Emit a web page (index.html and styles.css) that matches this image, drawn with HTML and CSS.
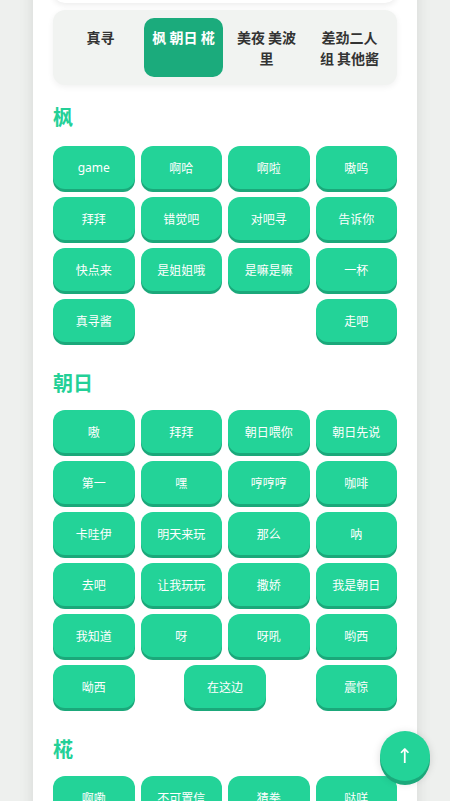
FILE: index.html
```html
<!DOCTYPE html>
<html lang="zh">
<head>
<meta charset="utf-8">
<title>Sounds</title>
<link rel="stylesheet" href="styles.css">
</head>
<body>
<div class="page">
  <div class="prev-card"></div>
  <nav class="tabs">
    <div class="tab">真寻</div>
    <div class="tab active">枫 朝日 椛</div>
    <div class="tab">美夜 美波里</div>
    <div class="tab">差劲二人组 其他酱</div>
  </nav>

  <section class="section">
    <h2 class="title">枫</h2>
    <div class="grid">
      <button class="btn">game</button>
      <button class="btn">啊哈</button>
      <button class="btn">啊啦</button>
      <button class="btn">嗷呜</button>
      <button class="btn">拜拜</button>
      <button class="btn">错觉吧</button>
      <button class="btn">对吧寻</button>
      <button class="btn">告诉你</button>
      <button class="btn">快点来</button>
      <button class="btn">是姐姐哦</button>
      <button class="btn">是嘛是嘛</button>
      <button class="btn">一杯</button>
      <button class="btn">真寻酱</button>
      <button class="btn">走吧</button>
    </div>
  </section>

  <section class="section">
    <h2 class="title">朝日</h2>
    <div class="grid">
      <button class="btn">嗷</button>
      <button class="btn">拜拜</button>
      <button class="btn">朝日喂你</button>
      <button class="btn">朝日先说</button>
      <button class="btn">第一</button>
      <button class="btn">嘿</button>
      <button class="btn">哼哼哼</button>
      <button class="btn">咖啡</button>
      <button class="btn">卡哇伊</button>
      <button class="btn">明天来玩</button>
      <button class="btn">那么</button>
      <button class="btn">呐</button>
      <button class="btn">去吧</button>
      <button class="btn">让我玩玩</button>
      <button class="btn">撒娇</button>
      <button class="btn">我是朝日</button>
      <button class="btn">我知道</button>
      <button class="btn">呀</button>
      <button class="btn">呀吼</button>
      <button class="btn">哟西</button>
      <button class="btn">呦西</button>
      <button class="btn">在这边</button>
      <button class="btn">震惊</button>
    </div>
  </section>

  <section class="section">
    <h2 class="title">椛</h2>
    <div class="grid">
      <button class="btn">啊嘞</button>
      <button class="btn">不可置信</button>
      <button class="btn">猜拳</button>
      <button class="btn">哒咩</button>
    </div>
  </section>
</div>
<button class="fab" aria-label="回到顶部">↑</button>
</body>
</html>
```
FILE: styles.css
```css
html, body {
  margin: 0;
  padding: 0;
}
body {
  background: #eef0ee;
  font-family: "Noto Sans", "Noto Sans CJK SC", sans-serif;
  overflow: hidden;
  height: 801px;
}
.page {
  width: 344px;
  margin: 0 auto;
  padding: 0 20px 40px;
  background: #ffffff;
  box-shadow: 0 0 14px rgba(0, 0, 0, 0.10);
  min-height: 801px;
}
.prev-card {
  height: 40px;
  margin-top: -37px;
  border-radius: 12px;
  background: #ffffff;
  box-shadow: 0 2px 6px rgba(0, 0, 0, 0.08);
}
.tabs {
  margin-top: 7px;
  background: #f1f3f1;
  border-radius: 12px;
  padding: 8px;
  display: grid;
  grid-template-columns: repeat(4, 1fr);
  gap: 4px;
  box-shadow: 0 2px 6px rgba(0, 0, 0, 0.06);
}
.tab {
  font-family: "Noto Sans CJK SC", sans-serif;
  font-size: 14px;
  font-weight: 700;
  line-height: 21px;
  color: #333333;
  text-align: center;
  padding: 9px 6px 8px;
  border-radius: 10px;
}
.tab.active {
  background: #1bab7c;
  color: #ffffff;
}
.title {
  margin: 0;
  padding-top: 18px;
  font-family: "Noto Sans CJK SC", sans-serif;
  font-size: 20px;
  line-height: 28px;
  font-weight: 700;
  color: #23d097;
  margin-bottom: 15px;
}
.section + .section .title {
  padding-top: 27px;
  margin-bottom: 13px;
}
.grid {
  display: flex;
  flex-wrap: wrap;
  justify-content: space-between;
  row-gap: 8px;
}
.btn {
  width: 81.5px;
  height: 43px;
  border: none;
  border-radius: 12px;
  background: #23d398;
  box-shadow: 0 3px 0 #1ba87a;
  color: #ffffff;
  font-family: "Noto Sans", "Noto Sans CJK SC", sans-serif;
  font-size: 12px;
  padding: 0;
  cursor: pointer;
}
.fab {
  position: fixed;
  right: 20px;
  bottom: 20px;
  width: 50px;
  height: 50px;
  border-radius: 50%;
  border: none;
  background: #23d398;
  box-shadow: 0 4px 0 #1ba87a, 0 2px 8px rgba(0, 0, 0, 0.15);
  color: #ffffff;
  font-family: "DejaVu Sans", sans-serif;
  font-size: 20px;
  line-height: 50px;
  padding: 0;
}
```
